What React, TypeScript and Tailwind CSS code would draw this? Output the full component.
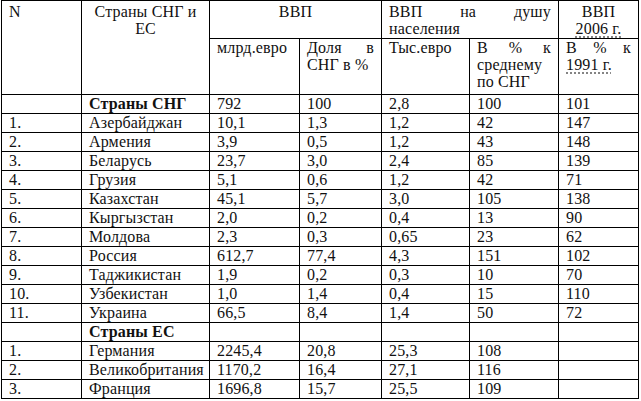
import React from "react";

const cis: [string, string, string, string, string, string, string][] = [
  ["1.", "Азербайджан", "10,1", "1,3", "1,2", "42", "147"],
  ["2.", "Армения", "3,9", "0,5", "1,2", "43", "148"],
  ["3.", "Беларусь", "23,7", "3,0", "2,4", "85", "139"],
  ["4.", "Грузия", "5,1", "0,6", "1,2", "42", "71"],
  ["5.", "Казахстан", "45,1", "5,7", "3,0", "105", "138"],
  ["6.", "Кыргызстан", "2,0", "0,2", "0,4", "13", "90"],
  ["7.", "Молдова", "2,3", "0,3", "0,65", "23", "62"],
  ["8.", "Россия", "612,7", "77,4", "4,3", "151", "102"],
  ["9.", "Таджикистан", "1,9", "0,2", "0,3", "10", "70"],
  ["10.", "Узбекистан", "1,0", "1,4", "0,4", "15", "110"],
  ["11.", "Украина", "66,5", "8,4", "1,4", "50", "72"],
];

const eu: [string, string, string, string, string, string, string][] = [
  ["1.", "Германия", "2245,4", "20,8", "25,3", "108", ""],
  ["2.", "Великобритания", "1170,2", "16,4", "27,1", "116", ""],
  ["3.", "Франция", "1696,8", "15,7", "25,5", "109", ""],
];

function Row({ r, bold }: { r: string[]; bold?: boolean }) {
  return (
    <>
      {r.map((c, i) => (
        <div
          key={i}
          className={
            "bg-white px-[7px] leading-[18px] whitespace-nowrap " +
            (bold && i === 1 ? "font-bold" : "")
          }
        >
          {c}
        </div>
      ))}
    </>
  );
}

function Just({ words }: { words: React.ReactNode[] }) {
  return (
    <div className="flex justify-between">
      {words.map((w, i) => (
        <span key={i}>{w}</span>
      ))}
    </div>
  );
}

export default function App() {
  return (
    <div
      className="w-[641px] h-[401px] bg-white text-[16px] tracking-[0.15px] text-[#111] overflow-hidden"
      style={{ fontFamily: '"Liberation Serif", "Times New Roman", serif' }}
    >
      <div className="ml-px inline-grid bg-black p-px gap-px grid-cols-[79px_127px_89px_81px_87px_88px_79px] grid-rows-[37px_55px_repeat(16,18px)]">
        {/* header row 1 */}
        <div className="row-span-2 bg-white px-[7px] pt-[2px] leading-[17px]">N</div>
        <div className="row-span-2 bg-white px-[7px] pt-[2px] leading-[17px] text-center">
          Страны СНГ и
          <br />
          ЕС
        </div>
        <div className="col-span-2 bg-white px-[7px] pt-[2px] leading-[17px] text-center">ВВП</div>
        <div className="col-span-2 bg-white px-[7px] pt-[2px] leading-[17px]">
          <Just words={["ВВП", "на", "душу"]} />
          <div>населения</div>
        </div>
        <div className="bg-white px-[7px] pt-[2px] leading-[17px] text-center">
          ВВП
          <br />
          <span className="underline decoration-dotted decoration-[#666] underline-offset-[3px]">2006 г.</span>
        </div>
        {/* header row 2 */}
        <div className="bg-white px-[7px] leading-[17px]">млрд.евро</div>
        <div className="bg-white px-[7px] leading-[17px]">
          <Just words={["Доля", "в"]} />
          <div>СНГ в %</div>
        </div>
        <div className="bg-white px-[7px] leading-[17px]">Тыс.евро</div>
        <div className="bg-white px-[7px] leading-[17px]">
          <Just words={["В", "%", "к"]} />
          <div>среднему</div>
          <div>по СНГ</div>
        </div>
        <div className="bg-white px-[7px] leading-[17px]">
          <Just words={["В", "%", "к"]} />
          <div>
            <span className="underline decoration-dotted decoration-[#666] underline-offset-[3px]">1991 г.</span>
          </div>
        </div>
        {/* body */}
        <Row r={["", "Страны СНГ", "792", "100", "2,8", "100", "101"]} bold />
        {cis.map((r, i) => (
          <Row key={"c" + i} r={r} />
        ))}
        <Row r={["", "Страны ЕС", "", "", "", "", ""]} bold />
        {eu.map((r, i) => (
          <Row key={"e" + i} r={r} />
        ))}
      </div>
    </div>
  );
}
